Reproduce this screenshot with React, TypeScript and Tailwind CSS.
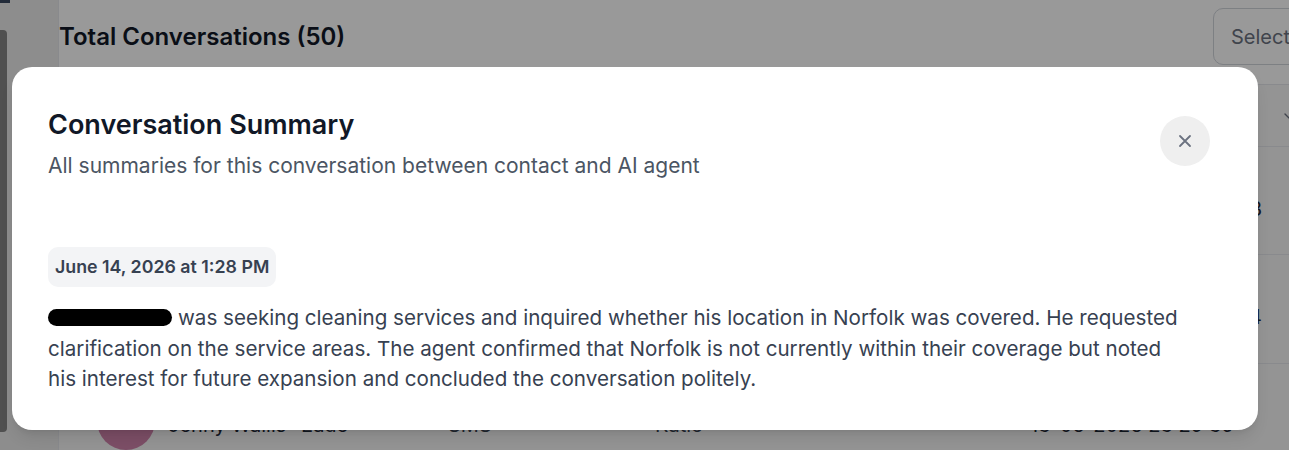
import React from "react";

function Chevron() {
  return (
    <svg width="16" height="16" viewBox="0 0 24 24" fill="none" stroke="#6b7280" strokeWidth="2" strokeLinecap="round" strokeLinejoin="round">
      <path d="m6 9 6 6 6-6" />
    </svg>
  );
}

export default function App() {
  return (
    <div className="relative w-[1289px] h-[450px] overflow-hidden bg-white font-['Inter','Noto_Sans',sans-serif]">
      {/* Background page */}
      <div className="flex h-full">
        <div className="relative w-[58px] shrink-0 bg-[#ececec]">
          <div className="absolute left-0 top-0 w-[10px] h-[3px] bg-[#3b4a62]" />
          <div className="absolute left-0 top-[30px] w-[7px] h-[402px] rounded-r-[4px] bg-[#858585]" />
        </div>
        <div className="flex-1 flex flex-col border-l border-[#e5e7eb]">
          <div className="flex items-start justify-between h-[92px] pt-[8px]">
            <div className="pt-[11px] text-[24px] font-semibold text-[#111827]">Total Conversations (50)</div>
            <div className="w-[100px] h-[57px] mr-[-24px] rounded-[10px] border border-[#d1d5db] flex items-center pl-[17px] text-[20px] text-[#6b7280]">Select</div>
          </div>
          <div className="flex-1 flex flex-col bg-[#f7f7f7]">
            <div className="h-[63px] border-t border-b border-[#e5e7eb] flex items-center justify-end">
              <div className="mr-[-8px]"><Chevron /></div>
            </div>
            <div className="h-[108px] border-b border-[#e5e7eb] flex items-center justify-end pr-[27px] pt-[16px] text-[20px] text-[#1f2937]">13-06-2026 23:41:43</div>
            <div className="h-[109px] border-b border-[#e5e7eb] flex items-center justify-end pr-[27px] pt-[16px] text-[20px] text-[#1f2937]">13-06-2026 23:35:14</div>
            <div className="flex items-start pt-[28px] pl-[38px] text-[20px] text-[#1f2937]">
              <div className="w-[58px] h-[58px] rounded-full bg-[#cf82ab] flex items-center justify-center text-white text-[18px] font-semibold">JW</div>
              <div className="ml-[13px] w-[280px] pt-[18px]">Jenny Wallis- Eade</div>
              <div className="w-[207px] pt-[18px] text-[#374151]">SMS</div>
              <div className="w-[375px] pt-[18px] text-[#374151]">Katie</div>
              <div className="pt-[18px]">13-06-2026 23:29:35</div>
            </div>
          </div>
        </div>
      </div>

      {/* Overlay */}
      <div className="absolute inset-0 bg-black/40" />

      {/* Modal */}
      <div className="absolute left-[12px] top-[67px] w-[1246px] h-[363px] rounded-[20px] bg-white shadow-lg">
        <div className="flex items-start justify-between pl-[36px] pr-[48px] pt-[41px]">
          <div>
            <h2 className="text-[27px] leading-[34px] font-semibold text-[#111827]">Conversation Summary</h2>
            <p className="mt-[10px] text-[21px] leading-[28px] text-[#4b5563]">All summaries for this conversation between contact and AI agent</p>
          </div>
          <button className="mt-[8px] w-[50px] h-[50px] rounded-full bg-[#efefef] flex items-center justify-center">
            <svg width="20" height="20" viewBox="0 0 24 24" fill="none" stroke="#6b7280" strokeWidth="2.2" strokeLinecap="round">
              <path d="M18 6 6 18M6 6l12 12" />
            </svg>
          </button>
        </div>
        <div className="pl-[36px] pr-[68px] pt-[67px]">
          <div className="inline-flex items-center h-[40px] px-[7px] rounded-[10px] bg-[#f3f4f6] text-[17.8px] font-semibold text-[#374151]">June 14, 2026 at 1:28 PM</div>
          <p className="mt-[16px] text-[20.6px] leading-[30.5px] text-[#374151]">
            <span className="inline-block align-middle w-[124px] h-[17px] rounded-full bg-black mr-[6px] -mt-[4px]" />
            was seeking cleaning services and inquired whether his location in Norfolk was covered. He requested clarification on the service areas. The agent confirmed that Norfolk is not currently within their coverage but noted his interest for future expansion and concluded the conversation politely.
          </p>
        </div>
      </div>
    </div>
  );
}
